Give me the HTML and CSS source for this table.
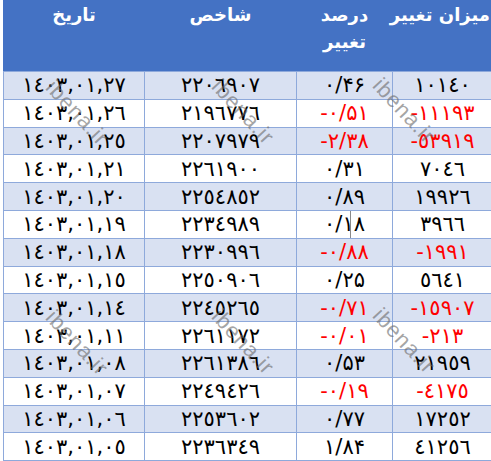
FILE: index.html
```html
<!DOCTYPE html>
<html lang="fa">
<head>
<meta charset="utf-8">
<link rel="stylesheet" href="styles.css">
</head>
<body>
<div class="wrap">
<table class="grid" dir="rtl">
  <colgroup>
    <col class="c-change"><col class="c-pct"><col class="c-index"><col class="c-date">
  </colgroup>
  <thead>
    <tr class="head">
      <th>میزان تغییر</th>
      <th>درصد<br>تغییر</th>
      <th>شاخص</th>
      <th>تاریخ</th>
    </tr>
  </thead>
  <tbody>
    <tr class="alt"><td><span class="n">١٠١٤٠</span></td><td><span class="n">۰/۴۶</span></td><td><span class="n">٢٢٠٦٩٠٧</span></td><td><span class="n">١٤٠٣,٠١,٢٧</span></td></tr>
    <tr><td class="neg"><span class="n">-١١١٩٣</span></td><td class="neg"><span class="n">-۰/۵۱</span></td><td><span class="n">٢١٩٦٧٧٦</span></td><td><span class="n">١٤٠٣,٠١,٢٦</span></td></tr>
    <tr class="alt"><td class="neg"><span class="n">-٥٣٩١٩</span></td><td class="neg"><span class="n">-۲/۳۸</span></td><td><span class="n">٢٢٠٧٩٧٩</span></td><td><span class="n">١٤٠٣,٠١,٢٥</span></td></tr>
    <tr><td><span class="n">٧٠٤٦</span></td><td><span class="n">۰/۳۱</span></td><td><span class="n">٢٢٦١٩٠٠</span></td><td><span class="n">١٤٠٣,٠١,٢١</span></td></tr>
    <tr class="alt"><td><span class="n">١٩٩٢٦</span></td><td><span class="n">۰/۸۹</span></td><td><span class="n">٢٢٥٤٨٥٢</span></td><td><span class="n">١٤٠٣,٠١,٢٠</span></td></tr>
    <tr><td><span class="n">٣٩٦٦</span></td><td class="cursor-cell"><span class="n">۰/۱۸</span><span class="cursor"></span></td><td><span class="n">٢٢٣٤٩٨٩</span></td><td><span class="n">١٤٠٣,٠١,١٩</span></td></tr>
    <tr class="alt"><td class="neg"><span class="n">-١٩٩١</span></td><td class="neg"><span class="n">-۰/۸۸</span></td><td><span class="n">٢٢٣٠٩٩٦</span></td><td><span class="n">١٤٠٣,٠١,١٨</span></td></tr>
    <tr><td><span class="n">٥٦٤١</span></td><td><span class="n">۰/۲۵</span></td><td><span class="n">٢٢٥٠٩٠٦</span></td><td><span class="n">١٤٠٣,٠١,١٥</span></td></tr>
    <tr class="alt"><td class="neg"><span class="n">-١٥٩٠٧</span></td><td class="neg"><span class="n">-۰/۷۱</span></td><td><span class="n">٢٢٤٥٢٦٥</span></td><td><span class="n">١٤٠٣,٠١,١٤</span></td></tr>
    <tr><td class="neg"><span class="n">-٢١٣</span></td><td class="neg"><span class="n">-۰/۰۱</span></td><td><span class="n">٢٢٦١١٧٢</span></td><td><span class="n">١٤٠٣,٠١,١١</span></td></tr>
    <tr class="alt"><td><span class="n">٢١٩٥٩</span></td><td><span class="n">۰/۵۳</span></td><td><span class="n">٢٢٦١٣٨٦</span></td><td><span class="n">١٤٠٣,٠١,٠٨</span></td></tr>
    <tr><td class="neg"><span class="n">-٤١٧٥</span></td><td class="neg"><span class="n">-۰/۱۹</span></td><td><span class="n">٢٢٤٩٤٢٦</span></td><td><span class="n">١٤٠٣,٠١,٠٧</span></td></tr>
    <tr class="alt"><td><span class="n">١٧٢٥٢</span></td><td><span class="n">۰/۷۷</span></td><td><span class="n">٢٢٥٣٦٠٢</span></td><td><span class="n">١٤٠٣,٠١,٠٦</span></td></tr>
    <tr><td><span class="n">٤١٢٥٦</span></td><td><span class="n">۱/۸۴</span></td><td><span class="n">٢٢٣٦٣٤٩</span></td><td><span class="n">١٤٠٣,٠١,٠٥</span></td></tr>
  </tbody>
</table>
<span class="wm wm1">ibena.ir</span>
<span class="wm wm2">ibena.ir</span>
<span class="wm wm3">ibena.ir</span>
<span class="wm wm4">ibena.ir</span>
<span class="wm wm5">ibena.ir</span>
<span class="wm wm6">ibena.ir</span>
</div>
</body>
</html>
```

FILE: styles.css
```css
html, body {
  margin: 0;
  padding: 0;
  background: #ffffff;
}
.wrap {
  position: relative;
  width: 491px;
  height: 461px;
  overflow: hidden;
  padding-left: 3px;
  box-sizing: border-box;
}
.grid {
  border-collapse: collapse;
  table-layout: fixed;
  width: 489px;
  font-family: "DejaVu Sans", "Noto Sans", sans-serif;
}
.c-change { width: 100px; }
.c-pct { width: 96px; }
.c-index { width: 152px; }
.c-date { width: 141px; }
.head th {
  height: 70px;
  padding: 0 2px;
  background: #4472c4;
  color: #ffffff;
  font-size: 18px;
  font-weight: bold;
  line-height: 27px;
  vertical-align: top;
  text-align: center;
  white-space: nowrap;
  border: 1px solid #4472c4;
  border-bottom-color: #8ea9db;
}
td {
  height: 26.8px;
  padding: 0;
  border: 1px solid #8ea9db;
  text-align: center;
  vertical-align: middle;
  color: #000000;
  font-size: 21px;
  line-height: 20px;
}
tr.alt td {
  background: #d9e1f2;
}
td.neg {
  color: #ff0000;
}
.n {
  direction: ltr;
  unicode-bidi: isolate;
  display: inline-block;
}
.cursor-cell {
  position: relative;
}
.cursor {
  position: absolute;
  left: 53px;
  top: 0;
  bottom: 0;
  width: 1px;
  background: #8a8a8a;
}
.wm {
  position: absolute;
  font-family: "Liberation Sans", Arial, sans-serif;
  font-size: 22px;
  letter-spacing: 1px;
  color: rgba(105, 105, 105, 0.6);
  transform: translate(-50%, -50%) rotate(47deg);
  white-space: nowrap;
  line-height: 1;
}
.wm1 { left: 77px; top: 113px; }
.wm2 { left: 243px; top: 112px; }
.wm3 { left: 404px; top: 111px; }
.wm4 { left: 77px; top: 343px; }
.wm5 { left: 243px; top: 342px; }
.wm6 { left: 404px; top: 341px; }
```
